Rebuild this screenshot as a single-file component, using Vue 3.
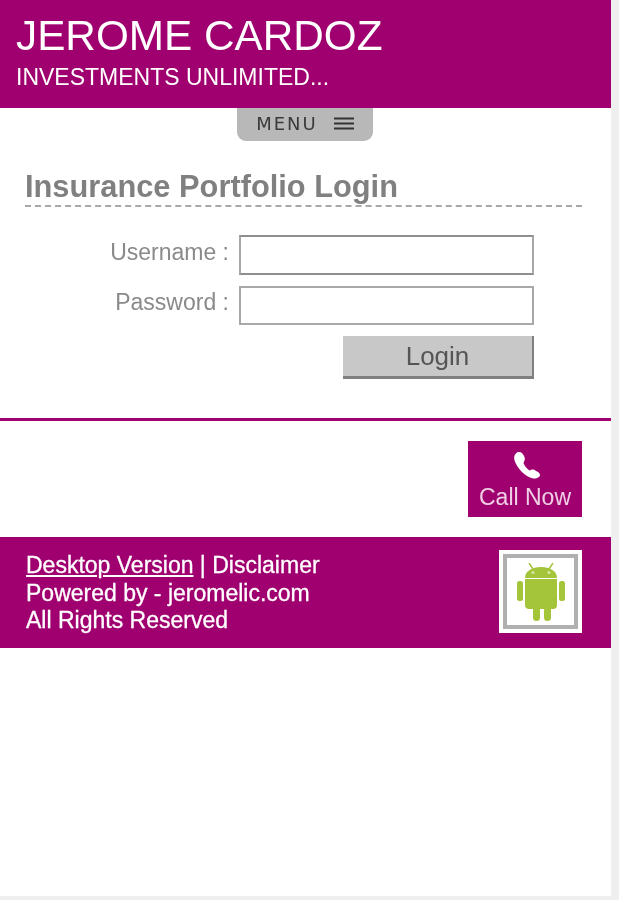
<script setup>
</script>

<template>
  <div class="page">
    <header class="top">
      <h1>JEROME CARDOZ</h1>
      <p>INVESTMENTS UNLIMITED...</p>
    </header>
    <div class="menu-wrap">
      <button class="menu-tab">
        <span>MENU</span>
        <svg width="20" height="13" viewBox="0 0 20 13">
          <path d="M0 1.500H20M0 6.500H20M0 11.500H20" stroke="#333" stroke-width="2" />
        </svg>
      </button>
    </div>

    <section class="login">
      <h2>Insurance Portfolio Login</h2>
      <form class="form" @submit.prevent>
        <label class="row">
          <span>Username :</span>
          <input type="text" class="inp inp-first" />
        </label>
        <label class="row">
          <span>Password :</span>
          <input type="password" class="inp" />
        </label>
        <div class="btn-row">
          <button class="login-btn">Login</button>
        </div>
      </form>
    </section>

    <div class="call-row">
      <a class="call">
        <svg class="phone" width="28" height="29" viewBox="0 0 28 29">
          <path d="M4 1.500C7 0 10 2 11.500 6C12.500 9 11 10.500 10.500 12C11.500 15 14 18 16.500 19.500C18 19 19.500 18 21.500 19C24.500 20.500 27 22 27 24C27 26.500 23 28 20 27.500C12 26 4 17 1.500 9.500C.5 6 1.500 3 4 1.500Z" fill="#fff" />
        </svg>
        <span>Call Now</span>
      </a>
    </div>

    <footer class="foot">
      <div class="foot-text">
        <div><a class="ul">Desktop Version</a> | Disclaimer</div>
        <div>Powered by - jeromelic.com</div>
        <div>All Rights Reserved</div>
      </div>
      <div class="android">
        <svg width="48" height="58" viewBox="0 0 48 58" fill="#a4c439">
          <path d="M12 0L16 6M36 0L32 6" stroke="#a4c439" stroke-width="1.500" />
          <path d="M8 15C8 8 15 4 24 4C33 4 40 8 40 15Z" />
          <path d="M8 16H40V42Q40 46 36 46H12Q8 46 8 42Z" />
          <rect x="0" y="18" width="6" height="20" rx="2.500" />
          <rect x="42" y="18" width="6" height="20" rx="2.500" />
          <rect x="16" y="44" width="7" height="14" rx="3.500" />
          <rect x="27" y="44" width="7" height="14" rx="3.500" />
          <circle cx="16" cy="9.500" r="1.500" fill="#dbe8a8" />
          <circle cx="32" cy="9.500" r="1.500" fill="#dbe8a8" />
        </svg>
      </div>
    </footer>
  </div>
</template>

<style>
html, body { background: #efefef; }
</style>

<style scoped>
.page {
  width: 611px; height: 896px; background: #fff;
  font-family: "Liberation Sans", Arial, sans-serif;
  overflow: hidden;
  filter: blur(.45px);
}
.top {
  background: #a0006f; color: #fff; height: 108px;
  padding: 14px 16px 0; box-sizing: border-box;
}
.top h1 { margin: 0; font-size: 42.300px; font-weight: 400; line-height: 44px; }
.top p { margin: 6px 0 0; font-size: 23px; line-height: 26px; }

.menu-wrap { display: flex; justify-content: center; height: 33px; }
.menu-tab {
  width: 136px; height: 33px; border: 0; padding: 0 0 2px;
  background: #b8b8b8; border-radius: 0 0 9px 9px;
  display: flex; align-items: center; justify-content: center; gap: 16px;
  margin-left: -1px;
  font-family: "DejaVu Sans", sans-serif; font-size: 18px; letter-spacing: 2px; color: #3a3a3a;
}

.login {
  padding: 28px 29px 0 25px; height: 280px; box-sizing: border-box;
  border-bottom: 3px solid #a0006f;
}
.login h2 {
  margin: 0; font-size: 30.800px; line-height: 36px; color: #808080; font-weight: 700;
  border-bottom: 2px dashed #a8a8a8;
}
.form { margin-top: 28px; padding-right: 48px; }
.row { display: flex; justify-content: flex-end; align-items: center; gap: 10px; margin-bottom: 11px; }
.row span { font-size: 23px; color: #8a8a8a; padding-bottom: 5px; }
.row + .row span { padding-bottom: 7px; }
.inp {
  width: 295px; height: 39px; box-sizing: border-box; background: #fff;
  border: 2px solid #a8a8a8; padding: 0; outline: 0;
}
.inp-first { height: 40px; border-color: #8f8f8f #a8a8a8 #8f8f8f #a8a8a8; }
.btn-row { display: flex; justify-content: flex-end; }
.login-btn {
  width: 191px; height: 43px; background: #c8c8c8; color: #555;
  border: 0; border-right: 2px solid #808080; border-bottom: 3px solid #808080;
  font-family: inherit; font-size: 26px; padding: 0;
}

.call-row { display: flex; justify-content: flex-end; padding: 20px 29px 20px 0; }
.call {
  width: 114px; height: 76px; background: #a0006f; color: #f0cfe4;
  display: flex; flex-direction: column; align-items: center; box-sizing: border-box; padding-top: 10px;
  font-size: 23px;
}
.phone { margin-left: 3px; }
.call span { line-height: 26px; margin-top: 4px; }

.foot {
  background: #a0006f; color: #fff; height: 111px;
  display: flex; justify-content: space-between; align-items: flex-start;
  padding: 15px 29px 0 26px; box-sizing: border-box;
  font-size: 23px; line-height: 27.500px;
  -webkit-text-stroke: .3px #fff;
}
.ul { text-decoration: underline; }
.android {
  width: 83px; height: 83px; box-sizing: border-box; margin-top: -2px;
  background: #fff; border: 4px solid #fff;
  box-shadow: inset 0 0 0 4px #b0b0b0;
  display: flex; align-items: center; justify-content: center;
}
</style>
